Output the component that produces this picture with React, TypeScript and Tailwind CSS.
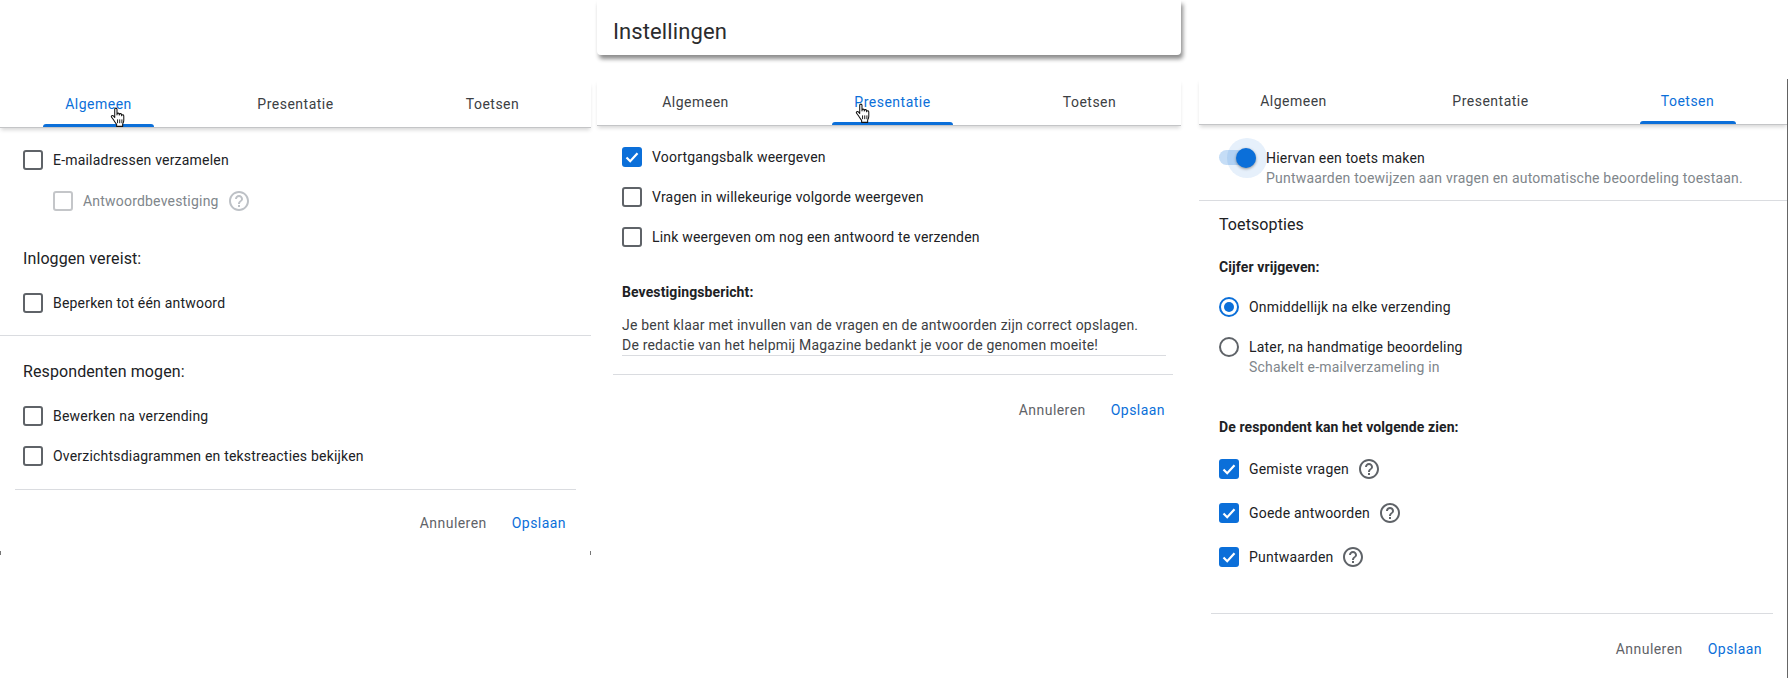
import type { ReactNode } from "react";

const HandCursor = ({ className }: { className: string }) => (
  <svg viewBox="0 0 18 22" width="17" height="21" className={className}>
    <path
      d="M5 2.2c0-1.5 2.4-1.5 2.4 0v6l.1-.9c.2-1.300 2.200-1.200 2.300.1v1l.2-.7c.3-1.200 2.200-1 2.300.3v1.100l.2-.4c.4-1 2.100-.7 2.100.6v4.500c0 2-.5 3-1.200 4.200v2.400H7v-2.200c-1-1.200-2.200-3-3.500-5.100-.7-1.100-1.900-2.100-2.100-2.900-.2-1 .9-1.600 1.900-1 .7.4 1.200 1.100 1.700 1.800z"
      fill="#fff"
      stroke="#111"
      strokeWidth="1.1"
      strokeLinejoin="round"
    />
    <path d="M8 13v4M10.300 13v4M12.600 13v4" stroke="#111" strokeWidth="1" fill="none" />
  </svg>
);

const HelpIcon = ({ muted }: { muted?: boolean }) => (
  <svg viewBox="0 0 24 24" width="24" height="24" fill={muted ? "#bdc1c6" : "#5f6368"} className="-ml-[2px]">
    <path d="M11 18h2v-2h-2v2zm1-16C6.480 2 2 6.480 2 12s4.480 10 10 10 10-4.480 10-10S17.520 2 12 2zm0 18c-4.410 0-8-3.590-8-8s3.590-8 8-8 8 3.590 8 8-3.590 8-8 8zm0-14c-2.210 0-4 1.790-4 4h2c0-1.100.9-2 2-2s2 .9 2 2c0 2-3 1.750-3 5h2c0-2.250 3-2.500 3-5 0-2.210-1.790-4-4-4z" />
  </svg>
);

const Checkbox = ({ checked, muted }: { checked?: boolean; muted?: boolean }) =>
  checked ? (
    <span className="flex h-5 w-5 shrink-0 items-center justify-center rounded-[3px] bg-[#0b6fd9]">
      <svg viewBox="0 0 20 20" width="20" height="20" fill="none" stroke="#fff" strokeWidth="2.2">
        <path d="M4.500 10.500l3.700 3.700 7.300-8" />
      </svg>
    </span>
  ) : (
    <span
      className={
        muted
          ? "h-5 w-5 shrink-0 rounded-[3px] border-2 border-[#c4c6c9]"
          : "h-5 w-5 shrink-0 rounded-[3px] border-2 border-[#5f6368]"
      }
    />
  );

const CheckRow = ({
  label,
  checked,
  muted,
  help,
  className,
}: {
  label: string;
  checked?: boolean;
  muted?: boolean;
  help?: boolean;
  className?: string;
}) => (
  <div className={`flex h-10 items-center gap-[10px] ${className ?? ""}`}>
    <Checkbox checked={checked} muted={muted} />
    <span className={muted ? "text-[14px] tracking-[0.2px] text-[#80868b]" : "text-[14px] tracking-[0.2px] text-[#202124]"}>
      {label}
    </span>
    {help && <HelpIcon muted={muted} />}
  </div>
);

const Tabs = ({
  active,
  underline,
  cursor,
  narrowFirst,
}: {
  active: number;
  underline: string;
  cursor?: ReactNode;
  narrowFirst?: boolean;
}) => (
  <div className="relative z-10 flex h-[46px] border-b border-[#c4c5c7] bg-white shadow-[0_3px_4px_-1px_rgba(0,0,0,0.16)]">
    {["Algemeen", "Presentatie", "Toetsen"].map((t, i) => (
      <div
        key={t}
        className={
          narrowFirst && i === 0
            ? "relative flex w-[193px] shrink-0 flex-col items-center pr-1"
            : "relative flex w-[197px] shrink-0 flex-col items-center"
        }
      >
        <span
          className={
            i === active
              ? "flex flex-1 items-center pt-[3px] text-[14px] tracking-[0.5px] text-[#0b6fd9]"
              : "flex flex-1 items-center pt-[3px] text-[14px] tracking-[0.5px] text-[#3c4043]"
          }
        >
          {t}
        </span>
        {i === active ? <div className={`h-[3px] rounded-t-[3px] bg-[#0b6fd9] ${underline}`} /> : <div className="h-[3px]" />}
        {i === active && cursor}
      </div>
    ))}
  </div>
);

const Actions = ({ className }: { className: string }) => (
  <div className={`flex h-9 items-center justify-end gap-[25px] text-[14px] tracking-[0.45px] ${className}`}>
    <span className="text-[#5f6368]">Annuleren</span>
    <span className="text-[#0b6fd9]">Opslaan</span>
  </div>
);

const Heading = ({ children, className }: { children: ReactNode; className: string }) => (
  <div className={`h-6 text-[16px] leading-6 tracking-[0.1px] text-[#202124] ${className}`}>{children}</div>
);

const SubHeading = ({ children, className }: { children: ReactNode; className: string }) => (
  <div className={`h-5 text-[14px] leading-5 font-bold tracking-[0.1px] text-[#202124] ${className}`}>{children}</div>
);

const Radio = ({ checked }: { checked?: boolean }) =>
  checked ? (
    <span className="flex h-5 w-5 shrink-0 items-center justify-center rounded-full border-2 border-[#0b6fd9]">
      <span className="h-[10px] w-[10px] rounded-full bg-[#0b6fd9]" />
    </span>
  ) : (
    <span className="h-5 w-5 shrink-0 rounded-full border-2 border-[#5f6368]" />
  );

const GeneralPanel = () => (
  <div className="relative w-[591px] shrink-0 pt-[82px]">
    <Tabs
      active={0}
      underline="w-[111px]"
      cursor={<HandCursor className="absolute left-[110px] top-[25px] z-20" />}
    />
    <div className="pl-[23px]">
      <CheckRow label="E-mailadressen verzamelen" className="mt-3" />
      <CheckRow label="Antwoordbevestiging" muted help className="mt-px ml-[30px]" />
      <Heading className="mt-[26px]">Inloggen vereist:</Heading>
      <CheckRow label="Beperken tot één antwoord" className="mt-3" />
    </div>
    <div className="mt-3 h-px bg-[#dadce0]" />
    <div className="pl-[23px]">
      <Heading className="mt-6">Respondenten mogen:</Heading>
      <CheckRow label="Bewerken na verzending" className="mt-3" />
      <CheckRow label="Overzichtsdiagrammen en tekstreacties bekijken" />
    </div>
    <div className="mx-[15px] mt-[13px] h-px bg-[#dadce0]" />
    <Actions className="mt-[15px] pr-[25px]" />
    <div className="absolute left-0 top-[551px] h-[4px] w-px bg-[#777]" />
    <div className="absolute right-0 top-[551px] h-[4px] w-px bg-[#777]" />
  </div>
);

const PresentationPanel = () => (
  <div className="ml-[6px] w-[592px] shrink-0">
    <div className="flex h-[55px] w-[584px] items-center rounded-b-[4px] bg-white pt-[7px] pl-4 text-[22px] tracking-[0.1px] text-[#2b2c2e] shadow-[2px_4px_4px_rgba(0,0,0,0.45)]">
      Instellingen
    </div>
    <div className="mt-[25px] w-[584px]">
      <Tabs
        active={1}
        underline="w-[121px]"
        cursor={<HandCursor className="absolute left-[61px] top-[23px] z-20" />}
      />
    </div>
    <div className="pl-[25px]">
      <CheckRow label="Voortgangsbalk weergeven" checked className="mt-[11px]" />
      <CheckRow label="Vragen in willekeurige volgorde weergeven" />
      <CheckRow label="Link weergeven om nog een antwoord te verzenden" />
      <SubHeading className="mt-[25px]">Bevestigingsbericht:</SubHeading>
      <div className="mt-[13px] w-[544px] border-b border-[#dadce0] text-[14px] leading-5 tracking-[0.2px] text-[#3c4043]">
        <p>Je bent klaar met invullen van de vragen en de antwoorden zijn correct opslagen.</p>
        <p>De redactie van het helpmij Magazine bedankt je voor de genomen moeite!</p>
      </div>
    </div>
    <div className="mt-[18px] ml-4 h-px w-[560px] bg-[#dadce0]" />
    <Actions className="mt-[17px] w-[568px]" />
  </div>
);

const QuizPanel = () => (
  <div className="ml-[10px] w-[589px] shrink-0 pt-[79px]">
    <div className="h-[599px] border-r border-[#666]">
      <Tabs active={2} underline="w-[96px]" narrowFirst />
      <div className="mt-[23px] flex h-10 pl-5">
        <div className="relative h-10 w-[47px] shrink-0">
          <div className="absolute left-0 top-[2px] h-[15px] w-[37px] rounded-full bg-[#c5ddf6]" />
          <div className="absolute left-[8px] -top-[10px] h-10 w-10 rounded-full bg-[#0b6fd9]/10" />
          <div className="absolute left-[17px] top-0 h-5 w-5 rounded-full bg-[#0b6fd9] shadow-[0_1px_3px_rgba(0,0,0,0.4)]" />
        </div>
        <div className="text-[14px] leading-5 tracking-[0.2px]">
          <div className="text-[#202124]">Hiervan een toets maken</div>
          <div className="text-[#80868b]">Puntwaarden toewijzen aan vragen en automatische beoordeling toestaan.</div>
        </div>
      </div>
      <div className="mt-3 h-px bg-[#dadce0]" />
      <div className="pl-5">
        <Heading className="mt-3">Toetsopties</Heading>
        <SubHeading className="mt-5">Cijfer vrijgeven:</SubHeading>
        <div className="mt-[10px] flex h-10 items-center gap-[10px] text-[14px] tracking-[0.2px] text-[#202124]">
          <Radio checked />
          <span>Onmiddellijk na elke verzending</span>
        </div>
        <div className="mt-[10px] flex gap-[10px] text-[14px] leading-5 tracking-[0.2px]">
          <Radio />
          <div>
            <div className="text-[#202124]">Later, na handmatige beoordeling</div>
            <div className="text-[#80868b]">Schakelt e-mailverzameling in</div>
          </div>
        </div>
        <SubHeading className="mt-10">De respondent kan het volgende zien:</SubHeading>
        <CheckRow label="Gemiste vragen" checked help className="mt-3" />
        <CheckRow label="Goede antwoorden" checked help className="mt-1" />
        <CheckRow label="Puntwaarden" checked help className="mt-1" />
      </div>
      <div className="mt-9 ml-3 h-px w-[562px] bg-[#dadce0]" />
      <Actions className="mt-[17px] w-[563px]" />
    </div>
  </div>
);

export default function App() {
  return (
    <div className="flex h-[678px] w-[1788px] overflow-hidden bg-white font-['Roboto',sans-serif]">
      <GeneralPanel />
      <PresentationPanel />
      <QuizPanel />
    </div>
  );
}
